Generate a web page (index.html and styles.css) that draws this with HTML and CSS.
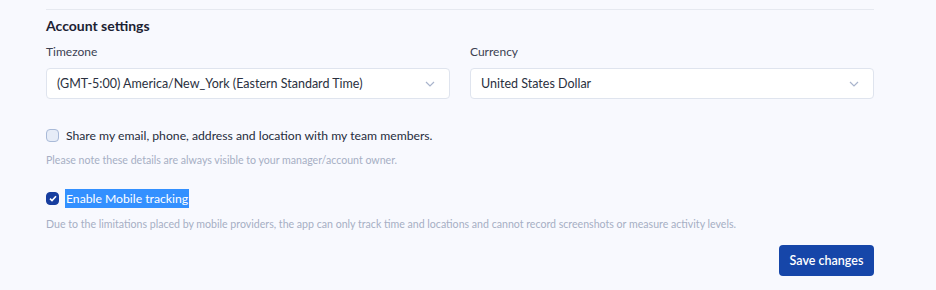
FILE: index.html
```html
<!DOCTYPE html>
<html lang="en">
<head>
  <meta charset="UTF-8" />
  <title>Account settings</title>
  <link rel="stylesheet" href="styles.css">
</head>
<body>
  <section class="settings">
    <h2>Account settings</h2>
    <div class="form-grid">
      <div class="input-group">
        <label>Timezone</label>
        <div class="select">
          <span>(GMT-5:00) America/New_York (Eastern Standard Time)</span>
          <svg width="10" height="6" viewBox="0 0 10 6"><path d="M1 1l4 4 4-4" fill="none" stroke="#a9b4cc" stroke-width="1.2"/></svg>
        </div>
      </div>
      <div class="input-group">
        <label>Currency</label>
        <div class="select">
          <span>United States Dollar</span>
          <svg width="10" height="6" viewBox="0 0 10 6"><path d="M1 1l4 4 4-4" fill="none" stroke="#a9b4cc" stroke-width="1.2"/></svg>
        </div>
      </div>
    </div>

    <div class="option">
      <div class="check-row">
        <span class="box"></span>
        <span class="check-label">Share my email, phone, address and location with my team members.</span>
      </div>
      <p class="note">Please note these details are always visible to your manager/account owner.</p>
    </div>

    <div class="option">
      <div class="check-row">
        <span class="box checked">
          <svg width="8" height="7" viewBox="0 0 8 7"><path d="M1 3.6l2 2 4-4.4" fill="none" stroke="#fff" stroke-width="1.6"/></svg>
        </span>
        <span class="check-label selected">Enable Mobile tracking</span>
      </div>
      <p class="note">Due to the limitations placed by mobile providers, the app can only track time and locations and cannot record screenshots or measure activity levels.</p>
    </div>

    <div class="actions">
      <button class="btn">Save changes</button>
    </div>
  </section>
</body>
</html>
```

FILE: styles.css
```css
* { box-sizing: border-box; }

body {
  margin: 0;
  background: #f8f9fe;
  font-family: 'Lato', 'Open Sans', sans-serif;
  color: #1f2536;
}

.settings {
  width: 828px;
  margin-left: 46px;
  margin-top: 9px;
  border-top: 1px solid #e6e9f0;
  padding-top: 7px;
}

h2 {
  margin: 0 0 10px;
  font-size: 14px;
  font-weight: 700;
  color: #1c2233;
}

.form-grid {
  display: grid;
  grid-template-columns: 1fr 1fr;
  gap: 20px;
}

.input-group {
  display: flex;
  flex-direction: column;
}

label {
  font-size: 12px;
  color: #3b4152;
  margin-bottom: 9px;
}

.select {
  height: 31px;
  background: #fff;
  border: 1px solid #dfe4ee;
  border-radius: 4px;
  padding: 0 14px 0 10px;
  display: flex;
  align-items: center;
  justify-content: space-between;
  font-size: 12.5px;
  color: #2a3040;
}

.option {
  margin-top: 28px;
}

.option + .option {
  margin-top: 23px;
}

.check-row {
  display: flex;
  align-items: center;
  gap: 7px;
}

.box {
  width: 13px;
  height: 13px;
  border: 1px solid #a9bad8;
  background: #e6ecf7;
  border-radius: 4px;
  display: flex;
  align-items: center;
  justify-content: center;
}

.box.checked {
  background: #173e9f;
  border-color: #173e9f;
}

.check-label {
  font-size: 12.2px;
  color: #262c3c;
  padding: 1px 0;
}

.selected {
  background: #3390ff;
  color: #fff;
  padding: 2px 1px;
  margin-left: -1px;
}

.note {
  margin: 10px 0 0;
  font-size: 10.6px;
  color: #a6afc4;
}

.actions {
  display: flex;
  justify-content: flex-end;
  margin-top: 15px;
}

.btn {
  height: 31px;
  width: 95px;
  background: #1646a9;
  color: #fff;
  border: none;
  border-radius: 4px;
  font-family: inherit;
  font-size: 12.5px;
  font-weight: 600;
}
```
